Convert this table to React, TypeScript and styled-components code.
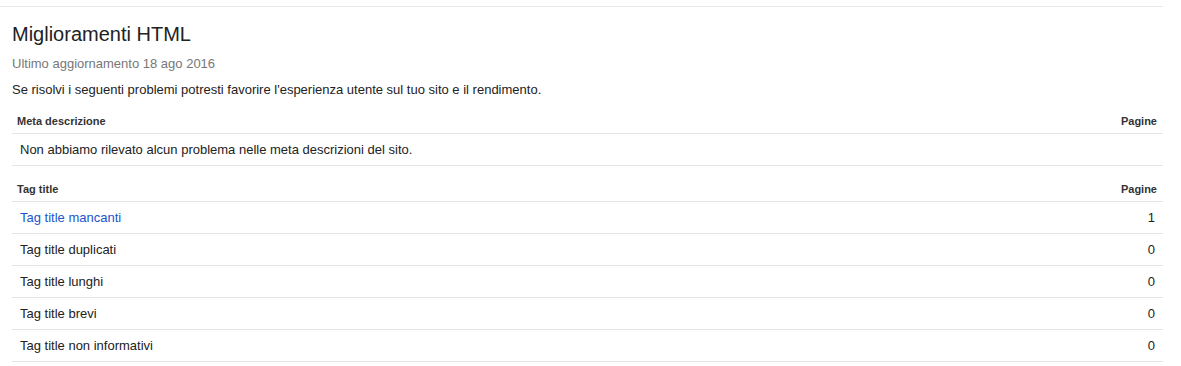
import React from "react";
import styled, { createGlobalStyle } from "styled-components";

const GlobalStyle = createGlobalStyle`
  html, body {
    margin: 0;
    padding: 0;
    background: #ffffff;
  }
  body {
    font-family: "Liberation Sans", Arial, sans-serif;
    color: #222222;
  }
`;

const Page = styled.div`
  width: 1163px;
  padding-top: 6px;
`;

const Divider = styled.div`
  height: 1px;
  background: #e8e8e8;
`;

const Content = styled.div`
  padding: 15px 0 0 12px;
`;

const Title = styled.h1`
  margin: 0;
  font-size: 20px;
  line-height: 24px;
  font-weight: normal;
  color: #222222;
`;

const Updated = styled.div`
  margin-top: 10px;
  font-size: 13px;
  line-height: 16px;
  color: #777777;
`;

const Intro = styled.p`
  margin: 10px 0 0;
  font-size: 13px;
  line-height: 16px;
  color: #222222;
`;

const Table = styled.div`
  margin-top: 11px;
`;

const HeadRow = styled.div`
  display: flex;
  align-items: center;
  justify-content: space-between;
  height: 24px;
  padding: 0 6px 0 5px;
  border-bottom: 1px solid #e5e5e5;
  font-size: 11px;
  font-weight: bold;
  color: #333333;
`;

const Row = styled.div`
  display: flex;
  align-items: center;
  justify-content: space-between;
  height: 31px;
  padding: 0 8px;
  border-bottom: 1px solid #e5e5e5;
  font-size: 13px;
  color: #222222;
`;

const Label = styled.span<{ $link?: boolean }>`
  color: ${(p) => (p.$link ? "#1a55cc" : "#222222")};
  cursor: ${(p) => (p.$link ? "pointer" : "default")};
`;

const Count = styled.span`
  min-width: 20px;
  text-align: right;
`;

type Issue = { label: string; pages: number };

const titleIssues: Issue[] = [
  { label: "Tag title mancanti", pages: 1 },
  { label: "Tag title duplicati", pages: 0 },
  { label: "Tag title lunghi", pages: 0 },
  { label: "Tag title brevi", pages: 0 },
  { label: "Tag title non informativi", pages: 0 },
];

export default function App() {
  return (
    <>
      <GlobalStyle />
      <Page>
        <Divider />
        <Content>
          <Title>Miglioramenti HTML</Title>
          <Updated>Ultimo aggiornamento 18 ago 2016</Updated>
          <Intro>
            Se risolvi i seguenti problemi potresti favorire l'esperienza utente sul tuo sito e il rendimento.
          </Intro>

          <Table>
            <HeadRow>
              <span>Meta descrizione</span>
              <span>Pagine</span>
            </HeadRow>
            <Row>
              <Label>Non abbiamo rilevato alcun problema nelle meta descrizioni del sito.</Label>
            </Row>
          </Table>

          <Table>
            <HeadRow>
              <span>Tag title</span>
              <span>Pagine</span>
            </HeadRow>
            {titleIssues.map((issue) => (
              <Row key={issue.label}>
                <Label $link={issue.pages > 0}>{issue.label}</Label>
                <Count>{issue.pages}</Count>
              </Row>
            ))}
          </Table>
        </Content>
      </Page>
    </>
  );
}
